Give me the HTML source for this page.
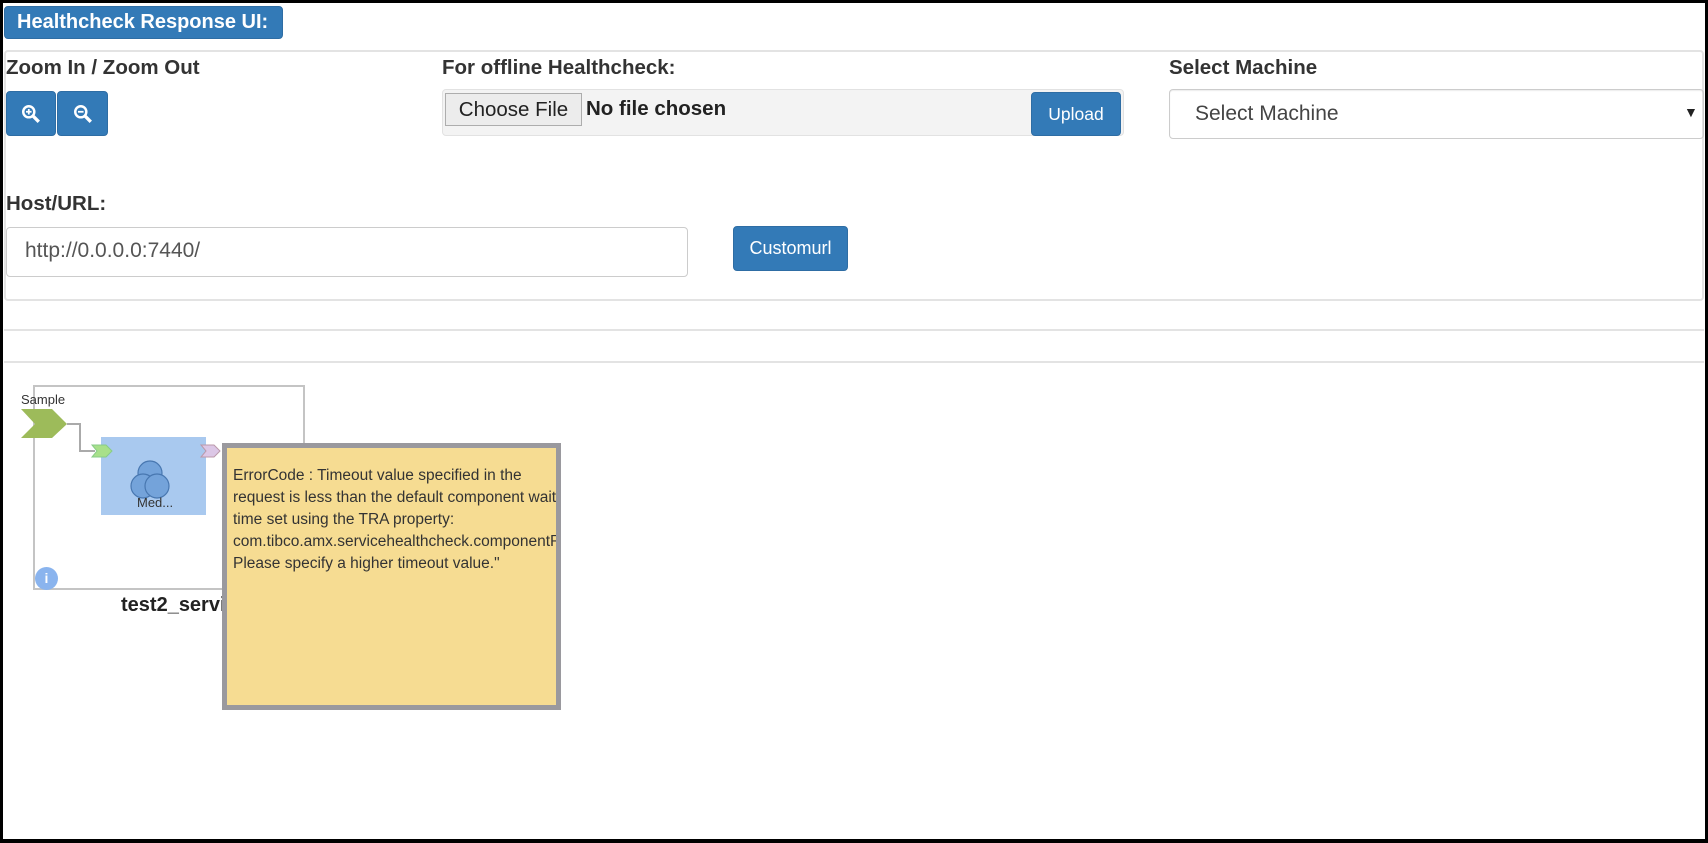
<!DOCTYPE html>
<html><head><meta charset="utf-8"><style>
*{box-sizing:border-box}
body{margin:0;width:1708px;height:843px;overflow:hidden;background:#000;font-family:"Liberation Sans",Arial,sans-serif;color:#333}
#pg{position:absolute;left:3px;top:3px;width:1702px;height:836px;background:#fff}
.a{position:absolute}
.lbl{font-weight:bold;font-size:20.5px;color:#333}
.btn{background:#337ab7;border:1px solid #2e6da4;border-radius:4px;color:#fff;font-size:17.5px;display:flex;align-items:center;justify-content:center}
.line{position:absolute;left:4px;width:1700px;height:2px;background:#e3e3e3}
</style></head><body><div id="pg"></div>
<div class="a btn" style="left:4px;top:6px;width:279px;height:33px;font-weight:bold;font-size:20px;justify-content:flex-start;padding-left:12px">Healthcheck Response UI:</div>
<div class="a" style="left:4px;top:50px;width:1700px;height:251px;border:2px solid #e3e3e3;border-radius:4px"></div>
<div class="line" style="top:329px"></div>
<div class="line" style="top:361px"></div>
<div class="a lbl" style="left:6px;top:56px">Zoom In / Zoom Out</div>
<div class="a btn" style="left:6px;top:91px;width:50px;height:45px"><svg width="20" height="20" viewBox="0 0 18 18"><circle cx="7" cy="7" r="5" fill="none" stroke="#fff" stroke-width="2.2"/><path d="M11 11l5 5" stroke="#fff" stroke-width="3"/><path d="M4.5 7h5M7 4.5v5" stroke="#fff" stroke-width="1.6"/></svg></div>
<div class="a btn" style="left:57px;top:91px;width:51px;height:45px"><svg width="20" height="20" viewBox="0 0 18 18"><circle cx="7" cy="7" r="5" fill="none" stroke="#fff" stroke-width="2.2"/><path d="M11 11l5 5" stroke="#fff" stroke-width="3"/><path d="M4.5 7h5" stroke="#fff" stroke-width="1.6"/></svg></div>
<div class="a lbl" style="left:442px;top:56px">For offline Healthcheck:</div>
<div class="a" style="left:442px;top:89px;width:682px;height:47px;background:#f3f3f3;border:1px solid #e2e2e2;border-radius:4px"></div>
<div class="a" style="left:445px;top:93px;width:137px;height:33px;background:#ececec;border:1px solid #adadad;font-size:20.5px;color:#222;display:flex;align-items:center;justify-content:center">Choose File</div>
<div class="a" style="left:586px;top:97px;font-size:20.5px;font-weight:bold;color:#222">No file chosen</div>
<div class="a btn" style="left:1031px;top:92px;width:90px;height:44px">Upload</div>
<div class="a lbl" style="left:1169px;top:56px">Select Machine</div>
<div class="a" style="left:1169px;top:89px;width:535px;height:50px;border:1px solid #ccc;border-radius:4px;box-shadow:inset 0 1px 1px rgba(0,0,0,.08)"></div>
<div class="a" style="left:1195px;top:102px;font-size:21px;color:#444">Select Machine</div>
<div class="a" style="left:1684px;top:104px;font-size:14px;color:#222">▼</div>
<div class="a lbl" style="left:6px;top:192px">Host/URL:</div>
<div class="a" style="left:6px;top:227px;width:682px;height:50px;border:1px solid #ccc;border-radius:4px"></div>
<div class="a" style="left:25px;top:239px;font-size:21px;color:#555">http://0.0.0.0:7440/</div>
<div class="a btn" style="left:733px;top:226px;width:115px;height:45px;font-size:18px">Customurl</div>
<div class="a" style="left:33px;top:385px;width:272px;height:205px;border:2px solid #c4c4c4"></div>
<div class="a" style="left:21px;top:392px;font-size:13px;color:#333">Sample</div>
<svg class="a" style="left:0;top:400px" width="240" height="130"><polygon points="21,9 52,9 67,24 52,38 21,38 35,24" fill="#9dbb5a"/><path d="M67 24H80V51H95" stroke="#aaa" stroke-width="2" fill="none"/><rect x="101" y="37" width="105" height="78" fill="#a9c9ef"/><polygon points="92,45 106,45 112,51 106,57 92,57 97,51" fill="#a8e08a" stroke="#8c8" stroke-width="1"/><polygon points="201,45 214,45 220,51 214,57 201,57 206,51" fill="#dcc7e6" stroke="#b9a" stroke-width="1"/><g fill="#6f9fd8" stroke="#3e6faa" stroke-width="1.2" opacity=".9"><circle cx="150" cy="73" r="12"/><circle cx="143" cy="86" r="12"/><circle cx="157" cy="86" r="12"/></g></svg>
<div class="a" style="left:137px;top:495px;font-size:13px;color:#333">Med...</div>
<div class="a" style="left:35px;top:567px;width:23px;height:23px;border-radius:50%;background:#8ab4ee;color:#fff;font-size:14px;font-weight:bold;text-align:center;line-height:23px">i</div>
<div class="a" style="left:121px;top:594px;font-size:20px;font-weight:bold;color:#222">test2_servi</div>
<div class="a" style="left:222px;top:443px;width:339px;height:267px;background:#f6dc92;border:5px solid #9a999e;overflow:hidden;padding:17px 0 0 6px;font-size:15.5px;line-height:22px;color:#333;white-space:nowrap">ErrorCode : Timeout value specified in the<br>request is less than the default component wait<br>time set using the TRA property:<br>com.tibco.amx.servicehealthcheck.componentResponseTimeout<br>Please specify a higher timeout value."</div>
</body></html>
